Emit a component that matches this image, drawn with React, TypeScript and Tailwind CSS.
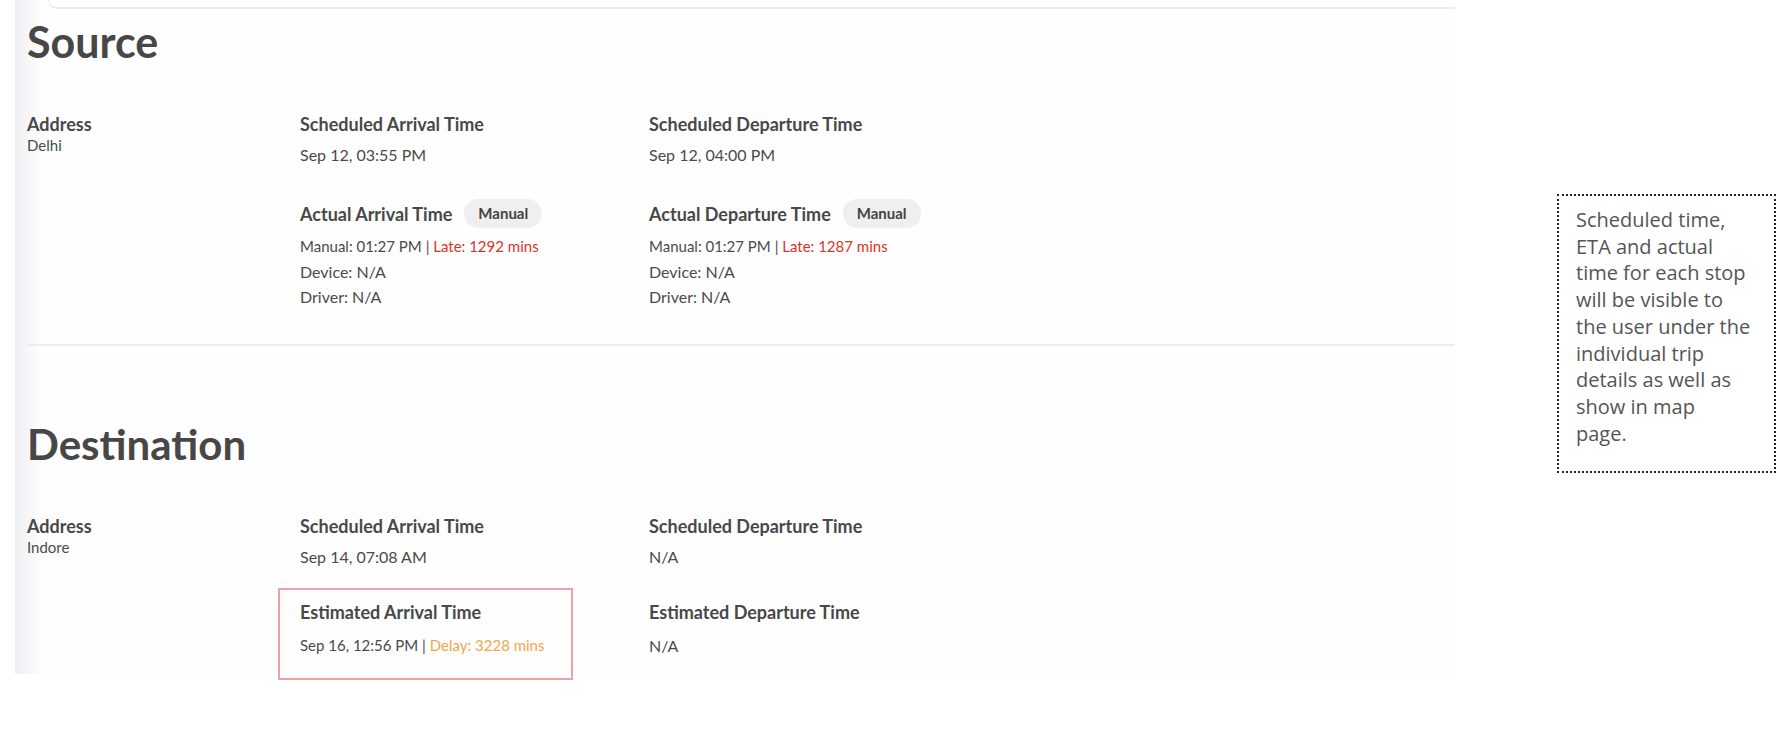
import React from "react";

const font = { fontFamily: "Lato, 'Open Sans', sans-serif" };

const Label = ({ children }: { children: React.ReactNode }) => (
  <div className="text-[18px] leading-[22px] font-bold text-[#484848]">{children}</div>
);

const Value = ({ children }: { children: React.ReactNode }) => (
  <div className="text-[16px] leading-[20px] text-[#4a4a4a]">{children}</div>
);

const Badge = () => (
  <span className="ml-[12px] inline-flex h-[29px] items-center rounded-full bg-[#efefef] px-[14px] text-[15px] font-bold text-[#444]">
    Manual
  </span>
);

const ActualBlock = ({
  title,
  late,
}: {
  title: string;
  late: string;
}) => (
  <div className="mt-[34px]">
    <div className="flex h-[29px] items-center">
      <Label>{title}</Label>
      <Badge />
    </div>
    <div className="mt-[6px] text-[16px] leading-[25px] text-[#4a4a4a]">
      <div className="text-[15px]">
        Manual: 01:27 PM | <span className="text-[#dc3328]">Late: {late} mins</span>
      </div>
      <div>Device: N/A</div>
      <div>Driver: N/A</div>
    </div>
  </div>
);

export default function App() {
  return (
    <div className="flex items-start bg-white min-h-[754px]" style={font}>
      {/* main panel */}
      <div className="ml-[15px] h-[674px] w-[1440px] shrink-0 bg-[linear-gradient(to_right,#f0f0f4_0px,#fefefe_28px)]">
        <div className="ml-[33px] h-[9px] rounded-bl-[9px] border-b-2 border-l border-[#ececec] bg-white" />

        <div className="pl-[12px]">
          {/* Source */}
          <h1 className="mt-[12px] text-[43px] leading-[42px] font-bold text-[#474747]">Source</h1>

          <div className="mt-[50px] grid grid-cols-[273px_349px_1fr]">
            <div>
              <Label>Address</Label>
              <div className="text-[15px] leading-[20px] text-[#4a4a4a]">Delhi</div>
            </div>
            <div>
              <Label>Scheduled Arrival Time</Label>
              <div className="mt-[10px]">
                <Value>Sep 12, 03:55 PM</Value>
              </div>
              <ActualBlock title="Actual Arrival Time" late="1292" />
            </div>
            <div>
              <Label>Scheduled Departure Time</Label>
              <div className="mt-[10px]">
                <Value>Sep 12, 04:00 PM</Value>
              </div>
              <ActualBlock title="Actual Departure Time" late="1287" />
            </div>
          </div>

          <div className="mt-[35px] h-[2px] bg-[#ececec]" />

          {/* Destination */}
          <h1 className="mt-[77px] text-[42px] leading-[42px] font-bold text-[#474747]">Destination</h1>

          <div className="mt-[50px] grid grid-cols-[273px_349px_1fr]">
            <div>
              <Label>Address</Label>
              <div className="text-[15px] leading-[20px] text-[#4a4a4a]">Indore</div>
            </div>
            <div>
              <Label>Scheduled Arrival Time</Label>
              <div className="mt-[10px]">
                <Value>Sep 14, 07:08 AM</Value>
              </div>
              <div className="relative mt-[30px]">
                <div className="absolute -left-[22px] -top-[9px] h-[92px] w-[295px] border-2 border-[#e9a3a3]" />
                <div className="flex h-[29px] items-center">
                  <Label>Estimated Arrival Time</Label>
                </div>
                <div className="mt-[7px] text-[15px] leading-[25px] text-[#4a4a4a]">
                  Sep 16, 12:56 PM | <span className="text-[#f5a54a]">Delay: 3228 mins</span>
                </div>
              </div>
            </div>
            <div>
              <Label>Scheduled Departure Time</Label>
              <div className="mt-[10px]">
                <Value>N/A</Value>
              </div>
              <div className="mt-[30px]">
                <div className="flex h-[29px] items-center">
                  <Label>Estimated Departure Time</Label>
                </div>
                <div className="mt-[7px] text-[16px] leading-[25px] text-[#4a4a4a]">N/A</div>
              </div>
            </div>
          </div>
        </div>
      </div>

      {/* annotation note */}
      <div
        className="ml-[102px] mt-[194px] h-[279px] w-[219px] shrink-0 border-2 border-dotted border-[#222] pl-[17px] pt-[11px] text-[20px] leading-[26.7px] text-[#555]"
        style={{ fontFamily: "'Open Sans', Lato, sans-serif" }}
      >
        Scheduled time,
        <br />
        ETA and actual
        <br />
        time for each stop
        <br />
        will be visible to
        <br />
        the user under the
        <br />
        individual trip
        <br />
        details as well as
        <br />
        show in map
        <br />
        page.
      </div>
    </div>
  );
}
